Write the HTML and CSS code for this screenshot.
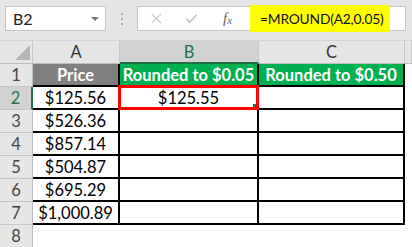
FILE: index.html
```html
<!DOCTYPE html>
<html>
<head>
    <title>MROUND example</title>
    <link rel="stylesheet" href="styles.css">
</head>
<body>
    <!-- Formula bar -->
    <div class="toolbar">
        <div class="name-box">
            <span>B2</span>
            <span class="drop"></span>
        </div>
        <div class="dots"><i></i><i></i><i></i></div>
        <div class="formula">
            <div class="fbtns">
                <svg class="ico" viewBox="0 0 14 14"><path d="M2 2L12 12M12 2L2 12" stroke="currentColor" stroke-width="1.4" fill="none"/></svg>
                <svg class="ico" viewBox="0 0 14 14"><path d="M1.5 7.5L5 11L12.5 3" stroke="currentColor" stroke-width="1.8" fill="none"/></svg>
                <span class="fx">f<sub>x</sub></span>
            </div>
            <div class="finput">
                <div class="hl">=MROUND(A2,0.05)</div>
            </div>
        </div>
    </div>

    <!-- Sheet -->
    <div class="sheet">
        <div class="ch corner"><span class="tri"></span></div>
        <div class="ch">A</div>
        <div class="ch sel">B</div>
        <div class="ch">C</div>
        <div class="ch"></div>

        <div class="rh">1</div>
        <div class="cell head gray">Price</div>
        <div class="cell head green">Rounded to $0.05</div>
        <div class="cell head green">Rounded to $0.50</div>
        <div class="rest"></div>

        <div class="rh sel">2</div>
        <div class="cell">$125.56</div>
        <div class="cell active">$125.55<span class="sel-box"><span class="handle"></span></span></div>
        <div class="cell"></div>
        <div class="rest"></div>

        <div class="rh">3</div>
        <div class="cell">$526.36</div>
        <div class="cell"></div>
        <div class="cell"></div>
        <div class="rest"></div>

        <div class="rh">4</div>
        <div class="cell">$857.14</div>
        <div class="cell"></div>
        <div class="cell"></div>
        <div class="rest"></div>

        <div class="rh">5</div>
        <div class="cell">$504.87</div>
        <div class="cell"></div>
        <div class="cell"></div>
        <div class="rest"></div>

        <div class="rh">6</div>
        <div class="cell">$695.29</div>
        <div class="cell"></div>
        <div class="cell"></div>
        <div class="rest"></div>

        <div class="rh">7</div>
        <div class="cell">$1,000.89</div>
        <div class="cell"></div>
        <div class="cell"></div>
        <div class="rest"></div>

        <div class="rh">8</div>
        <div class="rest"></div>
        <div class="rest"></div>
        <div class="rest"></div>
        <div class="rest"></div>
    </div>
</body>
</html>
```

FILE: styles.css
```css
body {
    margin: 0;
    width: 412px;
    height: 247px;
    overflow: hidden;
    background: white;
    font-family: Lato, "Open Sans", sans-serif;
}

/* Formula bar */
.toolbar {
    height: 41px;
    box-sizing: border-box;
    padding: 6px 6px 0 5px;
    background-color: #e6e6e6;
    display: flex;
    align-items: flex-start;
    border-bottom: 1px solid #d4d4d4;
}

.name-box {
    width: 101px;
    height: 25px;
    box-sizing: border-box;
    background: white;
    border: 1px solid #c6c6c6;
    display: flex;
    align-items: center;
    justify-content: space-between;
    padding: 0 6px 0 7px;
    font-size: 16px;
    color: #222;
}

.drop {
    width: 0;
    height: 0;
    border-left: 4px solid transparent;
    border-right: 4px solid transparent;
    border-top: 4px solid #777;
}

.dots {
    width: 31px;
    height: 25px;
    display: flex;
    flex-direction: column;
    align-items: center;
    justify-content: center;
    gap: 3px;
}

.dots i {
    width: 2px;
    height: 2px;
    background: #aaa;
}

.formula {
    flex: 1;
    height: 25px;
    box-sizing: border-box;
    background: white;
    border: 1px solid #c6c6c6;
    display: flex;
    align-items: center;
}

.fbtns {
    width: 112px;
    flex-shrink: 0;
    display: flex;
    align-items: center;
    padding-left: 12px;
    box-sizing: border-box;
    color: #c4c4c4;
}

.ico {
    width: 13px;
    height: 13px;
    margin-right: 22px;
}

.ico + .ico {
    margin-right: 25px;
}

.fx {
    font-family: "Liberation Serif", serif;
    font-style: italic;
    font-size: 15px;
    color: #666;
}

.fx sub {
    font-size: 11px;
    vertical-align: -1px;
}

.finput {
    flex: 1;
    display: flex;
    align-items: center;
    height: 23px;
}

.hl {
    width: 140px;
    height: 27px;
    flex-shrink: 0;
    background-color: #ffff00;
    box-sizing: border-box;
    padding-left: 10px;
    display: flex;
    align-items: center;
    font-size: 13.8px;
    letter-spacing: -0.2px;
    white-space: nowrap;
    color: #111;
}

/* Grid */
.sheet {
    display: grid;
    grid-template-columns: 33px 87px 139px 146px 1fr;
    grid-template-rows: 23px repeat(8, 23px);
    font-size: 16.5px;
}

.sheet > div {
    box-sizing: border-box;
    display: flex;
    align-items: center;
    justify-content: center;
}

.ch {
    background-color: #e6e6e6;
    border-right: 1px solid #c6c6c6;
    border-bottom: 1px solid #bdbdbd;
    color: #333;
}

.ch.sel {
    background-color: #d2d2d2;
    color: #217346;
    border-bottom: 2px solid #217346;
}

.corner {
    position: relative;
}

.tri {
    position: absolute;
    right: 2px;
    bottom: 3px;
    width: 0;
    height: 0;
    border-left: 15px solid transparent;
    border-bottom: 15px solid #b4b4b4;
}

.rh {
    background-color: #e6e6e6;
    border-right: 1px solid #bdbdbd;
    border-bottom: 1px solid #c6c6c6;
    color: #444;
}

.rh.sel {
    background-color: #d2d2d2;
    color: #217346;
    border-right: 2px solid #217346;
}

.cell {
    border-right: 2px solid #000;
    border-bottom: 2px solid #000;
    color: #000;
}

.head {
    font-weight: bold;
    color: white;
}

.gray {
    background-color: #808080;
}

.green {
    background-color: #00b050;
}

.active {
    position: relative;
}

.sel-box {
    position: absolute;
    top: -2px;
    left: -2px;
    right: -2px;
    bottom: -2px;
    border: 3px solid #ff0000;
}

.handle {
    position: absolute;
    right: 0;
    bottom: 0;
    width: 3px;
    height: 3px;
    background: #217346;
}
```
